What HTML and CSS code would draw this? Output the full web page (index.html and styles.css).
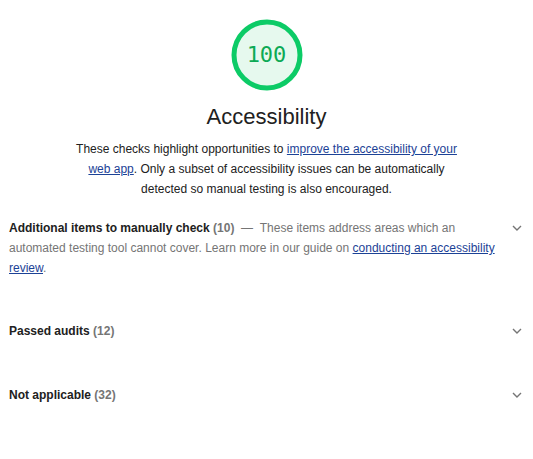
FILE: index.html
```html
<!DOCTYPE html>
<html lang="en">
<head>
<meta charset="utf-8">
<title>Accessibility</title>
<link rel="stylesheet" href="styles.css">
</head>
<body>
<div class="category">
  <div class="header">
    <div class="gauge">
      <svg viewBox="0 0 72 72" width="72" height="72">
        <circle cx="36" cy="36" r="33" class="gauge-base"></circle>
        <circle cx="36" cy="36" r="33" class="gauge-arc"></circle>
      </svg>
      <span class="gauge-value">100</span>
    </div>
    <div class="title">Accessibility</div>
    <p class="desc">These checks highlight opportunities to <a href="#">improve the accessibility of your web app</a>. Only a subset of accessibility issues can be automatically detected so manual testing is also encouraged.</p>
  </div>

  <div class="group group-first">
    <p class="group-text"><b class="group-title">Additional items to manually check</b> <b class="count">(10)</b> &nbsp;— &nbsp;These items address areas which an automated testing tool cannot cover. Learn more in our guide on <a href="#">conducting an accessibility review</a>.</p>
    <svg class="chev" viewBox="0 0 10 6" width="10" height="6"><path d="M1 1 L5 5 L9 1" /></svg>
  </div>

  <div class="group">
    <p class="group-text"><b class="group-title">Passed audits</b> <b class="count">(12)</b></p>
    <svg class="chev" viewBox="0 0 10 6" width="10" height="6"><path d="M1 1 L5 5 L9 1" /></svg>
  </div>

  <div class="group group-last">
    <p class="group-text"><b class="group-title">Not applicable</b> <b class="count">(32)</b></p>
    <svg class="chev" viewBox="0 0 10 6" width="10" height="6"><path d="M1 1 L5 5 L9 1" /></svg>
  </div>
</div>
</body>
</html>
```
FILE: styles.css
```css
html, body {
  margin: 0;
  padding: 0;
  background: #ffffff;
}
body {
  font-family: "Liberation Sans", Arial, sans-serif;
  color: #212121;
  font-size: 12px;
  line-height: 20px;
}
.category {
  padding: 0 9px;
}
.header {
  display: flex;
  flex-direction: column;
  align-items: center;
  padding-top: 19px;
}
.gauge {
  position: relative;
  width: 72px;
  height: 72px;
}
.gauge svg {
  display: block;
}
.gauge-base {
  fill: #e6f9ee;
  stroke: none;
}
.gauge-arc {
  fill: none;
  stroke: #0ccb66;
  stroke-width: 5;
}
.gauge-value {
  position: absolute;
  left: 0;
  right: 0;
  top: 0;
  bottom: 0;
  display: flex;
  align-items: center;
  justify-content: center;
  font-family: "DejaVu Sans Mono", "Liberation Mono", monospace;
  font-size: 22px;
  color: #0caa55;
}
.title {
  margin-top: 12px;
  font-size: 22px;
  line-height: 28px;
  color: #212121;
}
.desc {
  margin: 8px 0 0;
  max-width: 400px;
  text-align: center;
  font-size: 12px;
  line-height: 20px;
  color: #212121;
}
a {
  color: #1c4296;
  text-decoration: underline;
}
.group {
  display: flex;
  align-items: flex-start;
  justify-content: space-between;
  padding: 21px 0 22px;
}
.group-first {
  padding-top: 19px;
}
.group-last {
  padding-top: 22px;
}
.group-text {
  margin: 0;
  max-width: 492px;
  color: #757575;
}
.group-title {
  font-weight: bold;
  color: #212121;
}
.count {
  font-weight: bold;
  color: #757575;
}
.chev {
  margin-top: 7px;
  margin-right: 2px;
  fill: none;
  stroke: #757575;
  stroke-width: 1.4;
}
```
